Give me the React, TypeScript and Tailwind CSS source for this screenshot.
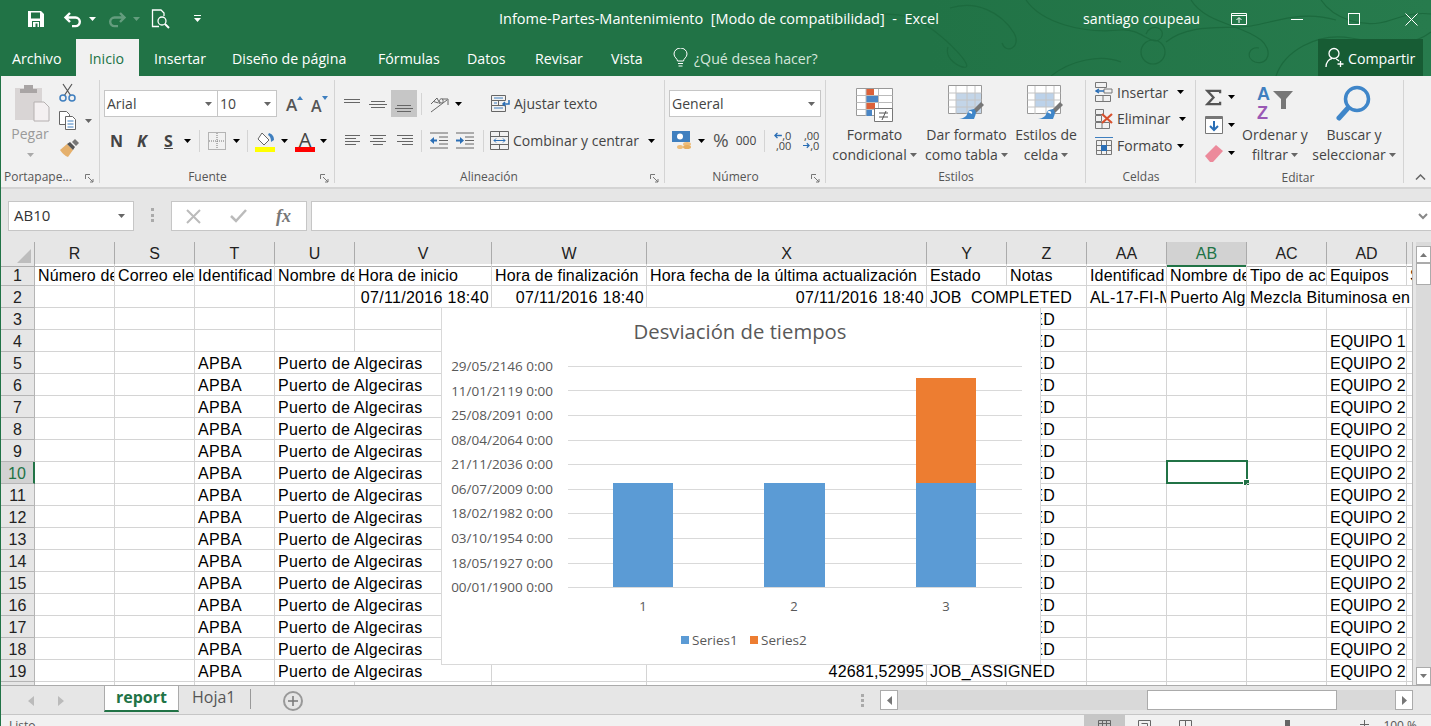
import { ReactNode } from "react";
import clsx from "clsx";

const ui = "font-['Open_Sans',sans-serif]";

function Caret({ className = "fill-[#666]" }: { className?: string }) {
  return (
    <svg width="7" height="4" viewBox="0 0 7 4" className={clsx("inline-block shrink-0", className)}>
      <path d="M0 0h7L3.5 4z" />
    </svg>
  );
}

function Launcher() {
  return (
    <svg width="9" height="9" viewBox="0 0 9 9" className="absolute right-[5px] bottom-0" fill="none" stroke="#777">
      <path d="M.5 5V.5H5M3 3l5 5M8 5v3H5" />
    </svg>
  );
}

function Group({ label, className, labelClass, children }: { label: string; className: string; labelClass?: string; children: ReactNode }) {
  return (
    <div className={clsx("relative my-1 flex shrink-0 flex-col border-r border-[#d4d4d4]", className)}>
      <div className="h-[86px]">{children}</div>
      <div className={clsx("mt-[6px] flex h-[12px] items-center justify-center text-[12px] leading-none text-[#555]", labelClass)}>{label}</div>
    </div>
  );
}

function Lines({ rows }: { rows: [number, number, number][] }) {
  return (
    <svg width="18" height="16" viewBox="0 0 18 16" stroke="#666" fill="none">
      {rows.map(([a, b, y]) => (
        <path key={y} d={`M${a} ${y + 0.5}H${b}`} />
      ))}
    </svg>
  );
}

function MiniTable({ variant }: { variant: "format" | "table" | "styles" }) {
  if (variant === "format") {
    return (
      <svg width="38" height="35" viewBox="0 0 38 35">
        <path d="M.5.5h36v27H.5z" fill="#fff" stroke="#999" />
        <path d="M10 1h8v6h-8z" fill="#dc6139" />
        <path d="M10 8h12v6H10z" fill="#4a86c5" />
        <path d="M10 15h9v6h-9z" fill="#dc6139" />
        <path d="M10 22h6v6h-6z" fill="#4a86c5" />
        <path d="M.5 7.5h36M.5 14.5h36M.5 21.5h36M10 1v27M22.500 1v27" stroke="#bbb" fill="none" />
        <path d="M18.500 20.500h18v13h-18z" fill="#fff" stroke="#777" />
        <path d="M23 25h9M23 29h9M30 23l-4 9" stroke="#555" fill="none" />
      </svg>
    );
  }
  return (
    <svg width="38" height="38" viewBox="0 0 38 38">
      <path d="M.5.5h33v28H.5z" fill="#fff" stroke="#999" />
      {variant === "table" ? <path d="M8 8h25v20H8z" fill="#c3d5e8" /> : <path d="M8 8h19v14H8z" fill="#bcd2ea" />}
      <path d="M.5 8h33M.5 15h33M.5 22h33M8 1v28M19 1v28M27 1v28" stroke="#c4c4c4" fill="none" />
      <path d="M24 26l9-9 3 3-9 9z" fill="#777" />
      <path d="M26 24l-4 1c-3 1-2 4-4 6-2 2-5 3-7 3h15c1-3 3-6 1-9z" fill="#3f86c9" />
      <path d="M20 27c2-2 5-1 4 2" fill="#fff" />
    </svg>
  );
}

const cols = ["R", "S", "T", "U", "V", "W", "X", "Y", "Z", "AA", "AB", "AC", "AD", ""];
const gridCols = "grid grid-cols-[34px_80px_80px_80px_80px_137px_155px_280px_80px_80px_80px_80px_80px_80px_7px]";

const row1 = ["Número de", "Correo ele", "Identificad", "Nombre de", "Hora de inicio", "Hora de finalización", "Hora fecha de la última actualización", "Estado", "Notas", "Identificad", "Nombre de", "Tipo de ac", "Equipos", "S"];
const row2 = ["", "", "", "", "07/11/2016 18:40", "07/11/2016 18:40", "07/11/2016 18:40", "JOB  COMPLETED", "", "AL-17-FI-M", "Puerto Alg", "Mezcla Bituminosa en", "", ""];

function cellText(row: number, col: number) {
  if (row === 1) return row1[col];
  if (row === 2) return row2[col];
  if (row > 19) return "";
  if (col === 7) return "JOB_ASSIGNED";
  if (col === 6) return "42681,52995";
  if (row < 4) return "";
  if (col === 12) return row === 4 ? "EQUIPO 1" : "EQUIPO 2";
  if (row === 4) return "";
  if (col === 2) return "APBA";
  if (col === 3) return "Puerto de Algeciras";
  return "";
}

function Cell({ row, col }: { row: number; col: number }) {
  const text = cellText(row, col);
  const spills = text === "JOB_ASSIGNED" || text === "JOB  COMPLETED" || text === "Puerto de Algeciras" || text.startsWith("Mezcla");
  const noRight = spills || (row === 2 && col === 12);
  const right = row === 2 && col >= 4 && col <= 6;
  const number = col === 6 && row > 2;
  const selected = row === 10 && col === 10;
  const wide = right || text === "Puerto de Algeciras" || text === "APBA";
  return (
    <div
      className={clsx(
        "relative h-[22px] border-b border-[#d4d4d4] pl-[3px] pr-[2px] text-[16px] leading-[23px] whitespace-pre text-black",
        text.startsWith("EQUIPO") ? "tracking-normal" : row === 1 ? "tracking-[0.15px]" : wide ? "tracking-[0.3px]" : "tracking-[0.18px]",
        !noRight && "border-r",
        spills ? "overflow-visible" : !selected && "overflow-hidden",
        (right || number) && "text-right"
      )}
    >
      {text}
      {selected && (
        <div className="absolute -left-px -top-[2px] h-[24px] w-[82px] border-2 border-[#217346]">
          <div className="absolute -bottom-[4px] -right-[4px] h-[7px] w-[7px] border border-white bg-[#217346]" />
        </div>
      )}
    </div>
  );
}

function Chart() {
  const grid = [59, 83.5, 108, 133, 157, 182, 206, 231, 256, 280];
  const labels = ["29/05/2146 0:00", "11/01/2119 0:00", "25/08/2091 0:00", "08/04/2064 0:00", "21/11/2036 0:00", "06/07/2009 0:00", "18/02/1982 0:00", "03/10/1954 0:00", "18/05/1927 0:00", "00/01/1900 0:00"];
  return (
    <div className="absolute left-[440px] top-[65px] h-[358px] w-[600px] border border-[#d9d9d9] bg-white">
      <svg width="598" height="356" viewBox="1 1 598 356" className={ui}>
        <text x="299" y="32" textAnchor="middle" fontSize="20.300" fill="#595959">Desviación de tiempos</text>
        {grid.map((y) => (
          <rect key={y} x="127" y={Math.floor(y)} width="454" height="1" fill="#d9d9d9" />
        ))}
        {labels.map((l, i) => (
          <text key={l} x="112" y={grid[i] + 5} textAnchor="end" fontSize="13.500" fill="#595959">{l}</text>
        ))}
        <rect x="172" y="176" width="60" height="104" fill="#5b9bd5" />
        <rect x="323" y="176" width="61" height="104" fill="#5b9bd5" />
        <rect x="475" y="176" width="60" height="104" fill="#5b9bd5" />
        <rect x="475" y="71" width="60" height="105" fill="#ed7d31" />
        {["1", "2", "3"].map((c, i) => (
          <text key={c} x={[202, 353, 505][i]} y="304" textAnchor="middle" fontSize="13" fill="#595959">{c}</text>
        ))}
        <rect x="240" y="329" width="8" height="8" fill="#5b9bd5" />
        <text x="251" y="338" fontSize="13.500" fill="#595959">Series1</text>
        <rect x="309" y="329" width="8" height="8" fill="#ed7d31" />
        <text x="320" y="338" fontSize="13.500" fill="#595959">Series2</text>
      </svg>
    </div>
  );
}

function TitleBar() {
  return (
    <div className="relative flex h-[38px] items-center text-white">
      <svg width="18" height="18" viewBox="0 0 18 18" className="ml-[27px]">
        <path d="M1 1h13l3 3v13H1z" fill="#fff" />
        <path d="M4 2.500h9v6H4z" fill="#217346" />
        <path d="M5 11h8v6H5z" fill="#217346" />
        <path d="M6 12h6v5h-1.500v-3.500h-2V17H6z" fill="#fff" />
      </svg>
      <svg width="20" height="17" viewBox="0 0 20 17" className="ml-[18px]" fill="none" stroke="#fff" strokeWidth="2.400">
        <path d="M7 2L2.500 6.500 7 11M3 6.500h9.500a4.300 4.300 0 0 1 0 8.600H9" />
      </svg>
      <Caret className="ml-[6px] fill-white" />
      <svg width="20" height="17" viewBox="0 0 20 17" className="ml-[11px] opacity-30" fill="none" stroke="#fff" strokeWidth="2.400">
        <path d="M13 2l4.500 4.500L13 11M17 6.500H7.500a4.300 4.300 0 0 0 0 8.600H11" />
      </svg>
      <Caret className="ml-[6px] fill-white opacity-30" />
      <svg width="20" height="20" viewBox="0 0 20 20" className="ml-[11px]" fill="none" stroke="#fff" strokeWidth="1.300">
        <path d="M8 17.500H1.500V1H10l3 3v3" />
        <circle cx="11" cy="12" r="4" />
        <path d="M14 15l4 4" strokeWidth="2" />
      </svg>
      <svg width="7" height="8" viewBox="0 0 7 8" className="ml-[23px]" fill="#fff">
        <path d="M0 0h7v1H0zM0 3h7L3.500 7z" />
      </svg>
      <div className={clsx("ml-[298px] w-[442px] text-[14.500px] whitespace-pre", ui)}>Infome-Partes-Mantenimiento  [Modo de compatibilidad]  -  Excel</div>
      <div className={clsx("ml-[142px] w-[120px] text-[14.200px] whitespace-nowrap", ui)}>santiago coupeau</div>
      <svg width="16" height="12" viewBox="0 0 16 12" className="ml-[28px]" fill="none" stroke="#fff">
        <path d="M.5.500h15v11H.5zM.5 2.500h15M8 10V5M5.500 7L8 4.500 10.500 7" />
      </svg>
      <div className="ml-[44px] h-px w-[12px] bg-white" />
      <div className="ml-[45px] h-[12px] w-[12px] border border-white" />
      <svg width="13" height="13" viewBox="0 0 13 13" className="ml-[45px]" stroke="#fff" fill="none">
        <path d="M.5.500l12 12M12.500.500l-12 12" />
      </svg>
    </div>
  );
}

function TabsRow() {
  return (
    <div className={clsx("flex h-[38px] items-stretch text-[14.200px] text-white", ui)}>
      <div className="w-[76px] pl-[12px] pt-[10px]">Archivo</div>
      <div className="mt-px w-[63px] bg-[#f1f1f1] pt-[9px] pr-[2px] text-center text-[#217346]">Inicio</div>
      <div className="ml-[15px] w-[78px] pt-[10px]">Insertar</div>
      <div className="w-[146px] pt-[10px]">Diseño de página</div>
      <div className="w-[89px] pt-[10px]">Fórmulas</div>
      <div className="w-[68px] pt-[10px]">Datos</div>
      <div className="w-[76px] pt-[10px]">Revisar</div>
      <div className="w-[62px] pt-[10px]">Vista</div>
      <svg width="15" height="19" viewBox="0 0 15 19" className="mt-[10px]" fill="none" stroke="#fff">
        <path d="M4.500 13c0-2.500-3.500-3.500-3.500-7a6.500 6 0 0 1 13 0c0 3.500-3.500 4.500-3.500 7zM5 15.500h5M5.500 18h4" />
      </svg>
      <div className="ml-[6px] w-[624px] pt-[10px] text-[#d5e6dc]">¿Qué desea hacer?</div>
      <div className="mt-px flex w-[105px] items-center bg-[#175c34] pl-[7px]">
        <svg width="20" height="21" viewBox="0 0 20 21" fill="none" stroke="#fff" strokeWidth="1.300">
          <circle cx="9" cy="6.500" r="5" />
          <path d="M1 20c0-5 3-8 6-8.500M11 12c1 .3 2 1 3 2M15.500 14v6M12.500 17h6" />
        </svg>
        <span className="ml-[3px] mt-[3px]">Compartir</span>
      </div>
    </div>
  );
}

function Ribbon() {
  return (
    <div className={clsx("flex h-[111px] bg-[#f1f1f1] text-[#444]", ui)}>
      <Group label="" className="w-[99px]">
        <div className="flex">
          <div className="ml-[9px] flex w-[40px] flex-col items-center pt-[4px]">
            <svg width="36" height="38" viewBox="0 0 36 38" className="ml-[5px]">
              <path d="M0 4h27v32H0z" fill="#d9d5d5" />
              <path d="M9 1h9v4h4v4H5V5h4z" fill="#a9a5a5" />
              <path d="M19 18h10l5 5v14H19z" fill="#f4f0f1" stroke="#b5b0b0" />
            </svg>
            <span className="mt-[1px] text-[14px] leading-[22px] text-[#9a9a9a]">Pegar</span>
            <Caret className="mt-[8px] fill-[#aaa]" />
          </div>
          <div className="ml-[9px] flex flex-col pt-[3px]">
            <svg width="18" height="19" viewBox="0 0 18 19" fill="none" stroke="#555" strokeWidth="1.200">
              <path d="M4 1l8 12M13 1L5 13" />
              <circle cx="4" cy="15" r="3" stroke="#3f7fbf" strokeWidth="1.500" />
              <circle cx="13" cy="15" r="3" stroke="#3f7fbf" strokeWidth="1.500" />
            </svg>
            <div className="mt-[9px] flex items-center">
              <svg width="18" height="19" viewBox="0 0 18 19" fill="#fff" stroke="#666">
                <path d="M.5.500h7l3 3v10H.5z" />
                <path d="M6.500 5.500h7l3 3v10h-10z" />
                <path d="M8.500 10h6M8.500 13h6M8.500 16h6" stroke="#3f7fbf" />
              </svg>
              <Caret className="ml-[8px] fill-[#666]" />
            </div>
            <svg width="20" height="19" viewBox="0 0 20 19" className="mt-[9px]">
              <path d="M1 11l7-6 6 6-5 7c-3-1-6-4-8-7z" fill="#e5b06c" />
              <path d="M8 5l3-2 5 5-2 3z" fill="#555" />
              <path d="M13 3l3-3 4 4-3 3z" fill="#777" />
            </svg>
          </div>
        </div>
        <div className="absolute bottom-0 left-[3px] flex h-[12px] items-center text-[12px] leading-none text-[#555]">Portapape...</div>
        <Launcher />
      </Group>

      <Group label="Fuente" labelClass="pr-[20px]" className="ml-px w-[234px]">
        <Launcher />
        <div className="flex items-center pl-[3px] pt-[10px]">
          <div className="flex h-[27px] w-[114px] items-center justify-between border border-[#c6c6c6] bg-white pl-[2px] pr-[5px] text-[14px]">Arial<Caret /></div>
          <div className="-ml-px flex h-[27px] w-[60px] items-center justify-between border border-[#c6c6c6] bg-white pl-[2px] pr-[5px] text-[14px]">10<Caret /></div>
          <div className="relative ml-[9px] h-[20px] w-[16px] text-[17px] leading-[22px] font-semibold text-[#555]">
            A
            <svg width="6" height="4" viewBox="0 0 6 4" className="absolute right-[-1px] top-[2px] fill-[#3f7fbf]"><path d="M3 0l3 4H0z" /></svg>
          </div>
          <div className="relative ml-[9px] h-[20px] w-[16px] text-[16px] leading-[24px] font-semibold text-[#555]">
            A
            <svg width="6" height="4" viewBox="0 0 6 4" className="absolute right-[-1px] top-[2px] fill-[#3f7fbf]"><path d="M0 0h6L3 4z" /></svg>
          </div>
        </div>
        <div className="mt-[12px] flex h-[23px] items-center pl-[3px] text-[16px] font-bold text-[#444]">
          <span className="w-[25px] text-center">N</span>
          <span className="w-[26px] text-center italic">K</span>
          <span className="w-[27px] text-center underline">S</span>
          <Caret className="ml-[2px]" />
          <div className="ml-[8px] h-[22px] w-px bg-[#d4d4d4]" />
          <svg width="18" height="18" viewBox="0 0 18 18" className="ml-[8px]" fill="none" stroke="#777" strokeDasharray="1 1">
            <path d="M.5.500h17v17H.5zM9 1v16M1 9h16" />
          </svg>
          <Caret className="ml-[7px]" />
          <div className="ml-[7px] h-[22px] w-px bg-[#d4d4d4]" />
          <svg width="21" height="22" viewBox="0 0 21 22" className="ml-[7px]">
            <path d="M7 3l7 7-5 5-6-6z" fill="#fff" stroke="#666" />
            <path d="M14 3c3 1 5 3 5 7l-3 2c0-4-1-6-3-7z" fill="#3f7fbf" />
            <path d="M0 17h20v5H0z" fill="#ffff00" />
          </svg>
          <Caret className="ml-[5px]" />
          <div className="relative ml-[7px] flex h-[22px] w-[20px] justify-center text-[20px] leading-[19px] font-normal text-[#444]">
            A
            <div className="absolute bottom-0 h-[5px] w-[20px] bg-[#ff0000]" />
          </div>
          <Caret className="ml-[5px]" />
        </div>
      </Group>

      <Group label="Alineación" labelClass="pr-[22px]" className="ml-px w-[329px]">
        <Launcher />
        <div className="flex h-full">
          <div className="w-[148px]">
            <div className="mt-[10px] flex h-[27px] items-center pl-[7px]">
              <Lines rows={[[1, 17, 3], [1, 17, 6]]} />
              <div className="ml-[8px]"><Lines rows={[[2, 16, 5], [0, 18, 8], [2, 16, 11]]} /></div>
              <div className="ml-[4px] flex h-[27px] w-[26px] items-end justify-center bg-[#c6c6c6] pb-[2px]"><Lines rows={[[2, 16, 6], [0, 18, 9], [2, 16, 12]]} /></div>
              <div className="ml-[4px] h-[22px] w-px bg-[#d4d4d4]" />
              <svg width="19" height="18" viewBox="0 0 19 18" className="ml-[8px]" fill="none" stroke="#666">
                <path d="M1 9l6-6 3 6M3.500 6.500l5 1.500M10 7c-2-2 2-5 3-2s-3 4-3 2M1 17L17 5M12 4h6v6" />
              </svg>
              <Caret className="ml-[6px]" />
            </div>
            <div className="mt-[12px] flex h-[23px] items-center pl-[9px]">
              <Lines rows={[[0, 15, 2], [0, 11, 5], [0, 15, 8], [0, 11, 11]]} />
              <div className="ml-[7px]"><Lines rows={[[0, 16, 2], [3, 13, 5], [0, 16, 8], [3, 13, 11]]} /></div>
              <div className="ml-[9px]"><Lines rows={[[0, 16, 2], [5, 16, 5], [0, 16, 8], [5, 16, 11]]} /></div>
              <div className="ml-[6px] h-[22px] w-px bg-[#d4d4d4]" />
              <svg width="19" height="17" viewBox="0 0 19 17" className="ml-[8px]" fill="none" stroke="#666">
                <path d="M0 1h18M9 5h9M9 8.500h9M9 12h9M0 16h18" />
                <path d="M0 8.500l4-3.500v2.500h3v2H4V12z" fill="#2a6eb5" stroke="none" />
              </svg>
              <svg width="19" height="17" viewBox="0 0 19 17" className="ml-[7px]" fill="none" stroke="#666">
                <path d="M0 1h18M9 5h9M9 8.500h9M9 12h9M0 16h18" />
                <path d="M8 8.500L4 5v2.500H0v2h4V12z" fill="#2a6eb5" stroke="none" />
              </svg>
              <div className="ml-[8px] h-[22px] w-px bg-[#d4d4d4]" />
            </div>
          </div>
          <div className="w-[175px]">
            <div className="mt-[10px] flex h-[27px] items-center pl-[7px] text-[14px]">
              <svg width="20" height="18" viewBox="0 0 20 18" fill="none" stroke="#666">
                <path d="M.5.500h14v5H.5zM.5 5.500h7v5H.5zM.5 10.500h14v6H.5z" />
                <path d="M3 3h9M3 8h3M3 13h9" stroke="#3f7fbf" />
                <path d="M18 5v4h-6M14 7l-2 2 2 2" stroke="#2a6eb5" strokeWidth="1.500" />
              </svg>
              <span className="ml-[3px]">Ajustar texto</span>
            </div>
            <div className="mt-[12px] flex h-[23px] items-center pl-[6px] text-[14px]">
              <svg width="20" height="19" viewBox="0 0 20 19" fill="none" stroke="#666">
                <path d="M.5.500h18v18H.5zM.5 5.500h18M.5 13.500h18M9.500 1v4M9.500 14v4" />
                <path d="M4 9.500h11M6 7.500l-2 2 2 2M13 7.500l2 2-2 2" stroke="#2a6eb5" />
              </svg>
              <span className="ml-[3px] whitespace-nowrap">Combinar y centrar</span>
              <Caret className="ml-[9px]" />
            </div>
          </div>
        </div>
      </Group>

      <Group label="Número" labelClass="pr-[20px]" className="ml-px w-[160px]">
        <Launcher />
        <div className="ml-[3px] mt-[10px] flex h-[27px] w-[152px] items-center justify-between border border-[#c6c6c6] bg-white pl-[2px] pr-[5px] text-[14px]">General<Caret /></div>
        <div className="mt-[12px] flex h-[23px] items-center pl-[6px]">
          <svg width="20" height="19" viewBox="0 0 20 19">
            <path d="M0 0h18v11H0z" fill="#3f7fbf" />
            <ellipse cx="8" cy="5.500" rx="3" ry="3" fill="#fff" />
            <ellipse cx="15" cy="13" rx="4" ry="2" fill="#eebd7a" />
            <ellipse cx="15" cy="16" rx="4" ry="2" fill="#e7ae60" />
            <ellipse cx="8" cy="16" rx="3" ry="2" fill="#eebd7a" />
          </svg>
          <Caret className="ml-[6px]" />
          <span className="ml-[8px] text-[19px] leading-none text-[#555]">%</span>
          <span className="ml-[7px] text-[12px]">000</span>
          <div className="ml-[8px] h-[22px] w-px bg-[#d4d4d4]" />
          <div className="ml-[9px] flex w-[17px] flex-col text-[11px] leading-[10px]">
            <span className="flex items-center justify-end">
              <svg width="9" height="7" viewBox="0 0 9 7" fill="none" stroke="#2a6eb5" strokeWidth="1.600"><path d="M9 3.500H1M4 .5l-3 3 3 3" /></svg>
              ,0
            </span>
            <span className="text-right">,00</span>
          </div>
          <div className="ml-[12px] flex w-[16px] flex-col text-[11px] leading-[10px]">
            <span className="text-right">,00</span>
            <span className="flex items-center justify-end">
              <svg width="9" height="7" viewBox="0 0 9 7" fill="none" stroke="#2a6eb5" strokeWidth="1.600"><path d="M0 3.500h8M5 .5l3 3-3 3" /></svg>
              ,0
            </span>
          </div>
        </div>
      </Group>

      <Group label="Estilos" className="ml-px w-[259px]">
        <div className="flex pl-[2px] text-[14px] leading-[20px]">
          <div className="flex w-[91px] flex-col items-center pt-[8px]">
            <MiniTable variant="format" />
            <span className="mt-[2px]">Formato</span>
            <span className="flex items-center gap-[3px]">condicional<Caret /></span>
          </div>
          <div className="ml-[2px] flex w-[89px] flex-col items-center pt-[5px]">
            <MiniTable variant="table" />
            <span className="mt-[2px]">Dar formato</span>
            <span className="flex items-center gap-[3px]">como tabla<Caret /></span>
          </div>
          <div className="ml-[2px] flex w-[66px] flex-col items-center pt-[5px]">
            <MiniTable variant="styles" />
            <span className="mt-[2px]">Estilos de</span>
            <span className="flex items-center gap-[3px]">celda<Caret /></span>
          </div>
        </div>
      </Group>

      <Group label="Celdas" className="ml-px w-[109px]">
        <div className="-mt-px flex flex-col pl-[8px] text-[14px]">
          <div className="flex h-[26px] items-center">
            <svg width="18" height="20" viewBox="0 0 18 20" fill="none" stroke="#777">
              <path d="M.5.500h11v5H.5zM.5 13.500h15v6H.5zM8 13.500v6" />
              <path d="M9 7h8v4H9z" /><path d="M9 9H1M4 7L1 9l3 2" stroke="#2a6eb5" strokeWidth="1.400" />
            </svg>
            <span className="ml-[4px]">Insertar</span>
            <Caret className="ml-[9px]" />
          </div>
          <div className="flex h-[27px] items-center">
            <svg width="18" height="20" viewBox="0 0 18 20" fill="none" stroke="#777">
              <path d="M.5.500h8v5H.5zM.5 6.500h6v6H.5zM.5 13.500h14v6H.5zM7 13.500v6" />
              <path d="M7 5l10 9M17 5L7 14" stroke="#d7502d" strokeWidth="2.200" />
            </svg>
            <span className="ml-[4px]">Eliminar</span>
            <Caret className="ml-[9px]" />
          </div>
          <div className="flex h-[27px] items-center">
            <svg width="18" height="20" viewBox="0 0 18 20" fill="none" stroke="#777">
              <path d="M1.500 4.500h15v14h-15zM1.500 9.500h15M1.500 14.500h15M6.500 5v14M11.500 5v14" />
              <path d="M0 1.500h18" stroke="#3f7fbf" />
              <path d="M6 9h6v6H6z" fill="#2a6eb5" stroke="none" />
            </svg>
            <span className="ml-[4px]">Formato</span>
            <Caret className="ml-[4px]" />
          </div>
        </div>
      </Group>

      <Group label="Editar" labelClass="pr-[4px]" className="ml-px w-[207px]">
        <div className="flex">
          <div className="ml-[8px] flex w-[30px] flex-col pt-[4px]">
            <div className="flex h-[26px] items-center">
              <svg width="18" height="17" viewBox="0 0 18 17" fill="none" stroke="#555" strokeWidth="2.400">
                <path d="M16 4V1.500H2.500l6.500 7-6.500 7H16V13" />
              </svg>
              <Caret className="ml-[6px]" />
            </div>
            <div className="mt-[2px] flex h-[26px] items-center">
              <svg width="18" height="18" viewBox="0 0 18 18" fill="none">
                <path d="M.5.500h17v17H.5z" fill="#fff" stroke="#777" />
                <path d="M1 1h16v2H1z" fill="#777" />
                <path d="M9 5v8M5 10l4 4 4-4" stroke="#2a6eb5" strokeWidth="2" />
              </svg>
              <Caret className="ml-[5px]" />
            </div>
            <div className="mt-[2px] flex h-[26px] items-center">
              <svg width="18" height="17" viewBox="0 0 18 17" fill="#ec8a9b">
                <path d="M0 11L11 0l7 6L8 17H5z" />
              </svg>
              <Caret className="ml-[5px]" />
            </div>
          </div>
          <div className="ml-[5px] flex w-[70px] flex-col items-center pt-[7px] text-[14px] leading-[20px]">
            <div className="relative h-[35px] w-[36px] font-['Liberation_Sans',sans-serif]">
              <span className="absolute left-0 top-[-2px] text-[18px] leading-[18px] font-bold text-[#3f7fbf]">A</span>
              <span className="absolute left-0 top-[17px] text-[18px] leading-[18px] font-bold text-[#9a59b5]">Z</span>
              <svg width="20" height="18" viewBox="0 0 20 18" className="absolute right-0 top-[4px]" fill="#777">
                <path d="M0 0h20l-7 8v10H8V8z" />
              </svg>
            </div>
            <span className="mt-[3px]">Ordenar y</span>
            <span className="flex items-center gap-[3px]">filtrar<Caret /></span>
          </div>
          <div className="ml-[1px] flex w-[86px] flex-col items-center pt-[5px] text-[14px] leading-[20px]">
            <svg width="36" height="37" viewBox="0 0 36 37" fill="none" stroke="#3f86c9">
              <circle cx="21" cy="14" r="11.500" strokeWidth="3.500" />
              <path d="M12 23L3 33" strokeWidth="5" strokeLinecap="round" />
            </svg>
            <span className="mt-[3px]">Buscar y</span>
            <span className="flex items-center gap-[3px]">seleccionar<Caret /></span>
          </div>
        </div>
      </Group>

      <div className="flex flex-1 items-end justify-end pb-[7px] pr-[5px]">
        <svg width="11" height="6" viewBox="0 0 11 6" fill="none" stroke="#666" strokeWidth="1.500">
          <path d="M1 5.500l4.500-4.500 4.500 4.500" />
        </svg>
      </div>
    </div>
  );
}

function FormulaBar() {
  return (
    <div className={clsx("flex h-[53px] items-start bg-[#e6e6e6] pt-[12px]", ui)}>
      <div className="ml-[7px] flex h-[30px] w-[126px] items-center justify-between border border-[#c6c6c6] bg-white pb-[1px] pl-[5px] pr-[8px] text-[15px] text-[#333]">AB10<Caret /></div>
      <div className="ml-[17px] mt-[7px] flex h-[14px] w-[3px] flex-col justify-between">
        <div className="h-[3px] w-[3px] bg-[#aaa]" />
        <div className="h-[3px] w-[3px] bg-[#aaa]" />
        <div className="h-[3px] w-[3px] bg-[#aaa]" />
      </div>
      <div className="ml-[17px] flex h-[30px] w-[136px] items-center border border-[#c6c6c6] bg-white pl-[14px]">
        <svg width="15" height="15" viewBox="0 0 15 15" stroke="#bbb" strokeWidth="2" fill="none">
          <path d="M1 1l13 13M14 1L1 14" />
        </svg>
        <svg width="17" height="14" viewBox="0 0 17 14" stroke="#bbb" strokeWidth="2.500" fill="none" className="ml-[29px]">
          <path d="M1 7l5 5L16 1" />
        </svg>
        <span className="ml-[29px] font-['Liberation_Serif',serif] text-[18px] leading-none font-bold text-[#777] italic">fx</span>
      </div>
      <div className="ml-[4px] flex h-[30px] flex-1 items-center justify-end border-y border-l border-[#c6c6c6] bg-white pr-[3px]">
        <svg width="10" height="7" viewBox="0 0 10 7" stroke="#888" strokeWidth="2" fill="none">
          <path d="M1 1l4 4 4-4" />
        </svg>
      </div>
    </div>
  );
}

function Sheet() {
  const rowNumbers = Array.from({ length: 20 }, (_, i) => i + 1);
  return (
    <div className="relative h-[443px] w-[1413px] overflow-hidden border-r border-[#bbb] bg-white font-['Liberation_Sans',sans-serif]">
      <div className={clsx(gridCols, "h-[22px] bg-[#e6e6e6]")}>
        <div className="relative border-b border-r border-[#ababab]">
          <svg width="14" height="14" viewBox="0 0 14 14" className="absolute bottom-[3px] right-[3px]" fill="#bdbdbd">
            <path d="M14 0v14H0z" />
          </svg>
        </div>
        {cols.map((c, i) => (
          <div
            key={i}
            className={clsx(
              "border-r border-[#ababab] text-center text-[16px] leading-[23px]",
              c === "AB" ? "border-b-2 border-b-[#217346] bg-[#d2d2d2] text-[#217346]" : "border-b text-[#222]"
            )}
          >
            {c}
          </div>
        ))}
      </div>
      {rowNumbers.map((r) => (
        <div key={r} className={gridCols}>
          <div
            className={clsx(
              "h-[22px] border-b border-r border-[#b5b5b5] text-center text-[16px] leading-[23px]",
              r === 10 ? "border-r-2 border-r-[#217346] bg-[#d2d2d2] text-[#217346]" : "bg-[#e6e6e6] text-[#222]"
            )}
          >
            {r}
          </div>
          {cols.map((_, c) => (
            <Cell key={c} row={r} col={c} />
          ))}
        </div>
      ))}
      <Chart />
    </div>
  );
}

function VScroll() {
  return (
    <div className="ml-[3px] flex h-[443px] w-[15px] flex-col bg-[#dadada] pt-[4px]">
      <div className="flex h-[17px] items-center justify-center border border-[#ababab] bg-white">
        <Caret className="rotate-180 fill-[#777]" />
      </div>
      <div className="h-[22px] border border-[#ababab] bg-white" />
      <div className="flex-1" />
      <div className="flex h-[18px] items-center justify-center border border-[#ababab] bg-white">
        <Caret className="fill-[#777]" />
      </div>
    </div>
  );
}

function TabBar() {
  return (
    <div className="flex h-[29px] border-t border-[#ababab] bg-[#e6e6e6]">
      <svg width="36" height="12" viewBox="0 0 36 12" className="ml-[27px] mt-[9px]" fill="#bbb">
        <path d="M6 1v10L0 6zM30 1v10l6-5z" />
      </svg>
      <div className="ml-[40px] flex h-[26px] w-[75px] items-center justify-center border-x border-b-2 border-[#ababab] border-b-[#217346] bg-white pb-[3px] font-['Open_Sans',sans-serif] text-[16px] font-bold text-[#217346]">report</div>
      <div className="ml-[13px] -mt-[1px] font-['Open_Sans',sans-serif] text-[16px] text-[#555]">Hoja1</div>
      <div className="ml-[14px] mt-[3px] h-[20px] w-px bg-[#999]" />
      <div className="ml-[32px] mt-[5px] flex h-[20px] w-[20px] items-center justify-center rounded-full border-2 border-[#999]">
        <svg width="10" height="10" viewBox="0 0 10 10" stroke="#777" strokeWidth="1.500">
          <path d="M5 0v10M0 5h10" />
        </svg>
      </div>
      <div className="ml-auto mr-[18px] mt-[4px] flex h-[20px] items-stretch">
        <div className="mr-[16px] flex flex-col justify-center gap-[2px]">
          <div className="h-[3px] w-[3px] bg-[#aaa]" />
          <div className="h-[3px] w-[3px] bg-[#aaa]" />
          <div className="h-[3px] w-[3px] bg-[#aaa]" />
        </div>
        <div className="flex w-[18px] items-center justify-center border border-[#ababab] bg-white">
          <svg width="5" height="9" viewBox="0 0 5 9" fill="#777"><path d="M5 0L0 4.500 5 9z" /></svg>
        </div>
        <div className="w-[497px] bg-[#d9d9d9] pl-[249px]">
          <div className="h-[20px] w-[190px] border border-[#ababab] bg-white" />
        </div>
        <div className="flex w-[18px] items-center justify-center border border-[#ababab] bg-white">
          <svg width="5" height="9" viewBox="0 0 5 9" fill="#777"><path d="M0 0l5 4.500L0 9z" /></svg>
        </div>
      </div>
    </div>
  );
}

function StatusBar() {
  return (
    <div className="flex h-[12px] items-start overflow-hidden border-t border-[#c6c6c6] bg-[#f1f1f1] font-['Open_Sans',sans-serif] text-[12px] leading-[22px] text-[#555]">
      <span className="ml-[8px]">Listo</span>
      <div className="ml-auto flex h-[12px] w-[41px] items-start justify-center bg-[#c6c6c6] pt-[5px]">
        <svg width="13" height="7" viewBox="0 0 13 7" fill="none" stroke="#666"><path d="M.5.500h12V7H.5zM4.500 1v6M8.500 1v6M1 3.500h11" /></svg>
      </div>
      <svg width="13" height="7" viewBox="0 0 13 7" fill="none" stroke="#666" className="ml-[13px] mt-[5px]"><path d="M.5.500h12V7H.5zM3.500 3.500h6V7" /></svg>
      <svg width="13" height="7" viewBox="0 0 13 7" fill="none" stroke="#666" className="ml-[28px] mt-[5px]"><path d="M.5.500h12V7H.5zM6.500 1v6" /></svg>
      <div className="ml-[93px] mt-[5px] h-[7px] w-[5px] bg-[#666]" />
      <svg width="9" height="9" viewBox="0 0 9 9" stroke="#666" className="ml-[70px] mt-[5px]"><path d="M4.500 0v9M0 4.500h9" /></svg>
      <span className="ml-[14px] mr-[14px]">100 %</span>
    </div>
  );
}

export default function App() {
  return (
    <div className="relative h-[726px] w-[1431px] overflow-hidden bg-[#e6e6e6]">
      <div className="relative bg-[#217346]">
        <div className="absolute inset-y-0 right-0 w-[500px] bg-gradient-to-r from-[#217346] to-[#277b4d]" />
        <svg width="600" height="76" viewBox="0 0 600 76" className="absolute right-0 top-0" fill="none" stroke="#1c6a3e" strokeWidth="1.200">
          <path d="M0 30C30 12 70 8 95 25s45 40 40 42-22-8-18-20" />
          <path d="M119 8C145 0 170 12 183 33c8 14-8 22-12 10" />
          <path d="M195 0c15 22 55 34 95 30 20-2 32 18 40 8 6-10-10-16-15-4" />
          <path d="M310 52a12 12 0 1 0 24 0 12 12 0 1 0-24 0M335 42c25-20 60-12 85-16s50-16 85-6" />
          <path d="M360 0c15 24 50 24 70 40 12 10 8 26-6 22-10-4-6-16 4-14" />
          <path d="M445 76c8-24 40-44 75-38s60 10 80-6" />
          <path d="M490 0c12 18 42 30 70 20 12-4 25-8 40-6" />
          <path d="M220 76c20-16 50-22 70-14" />
        </svg>
        <div className="relative">
          <TitleBar />
          <TabsRow />
        </div>
      </div>
      <div className="border-l border-[#217346]">
        <Ribbon />
        <div className="h-[2px] bg-[#d4d4d4]" />
        <FormulaBar />
        <div className="flex bg-[#e6e6e6]">
          <Sheet />
          <VScroll />
        </div>
        <TabBar />
        <StatusBar />
      </div>
    </div>
  );
}
